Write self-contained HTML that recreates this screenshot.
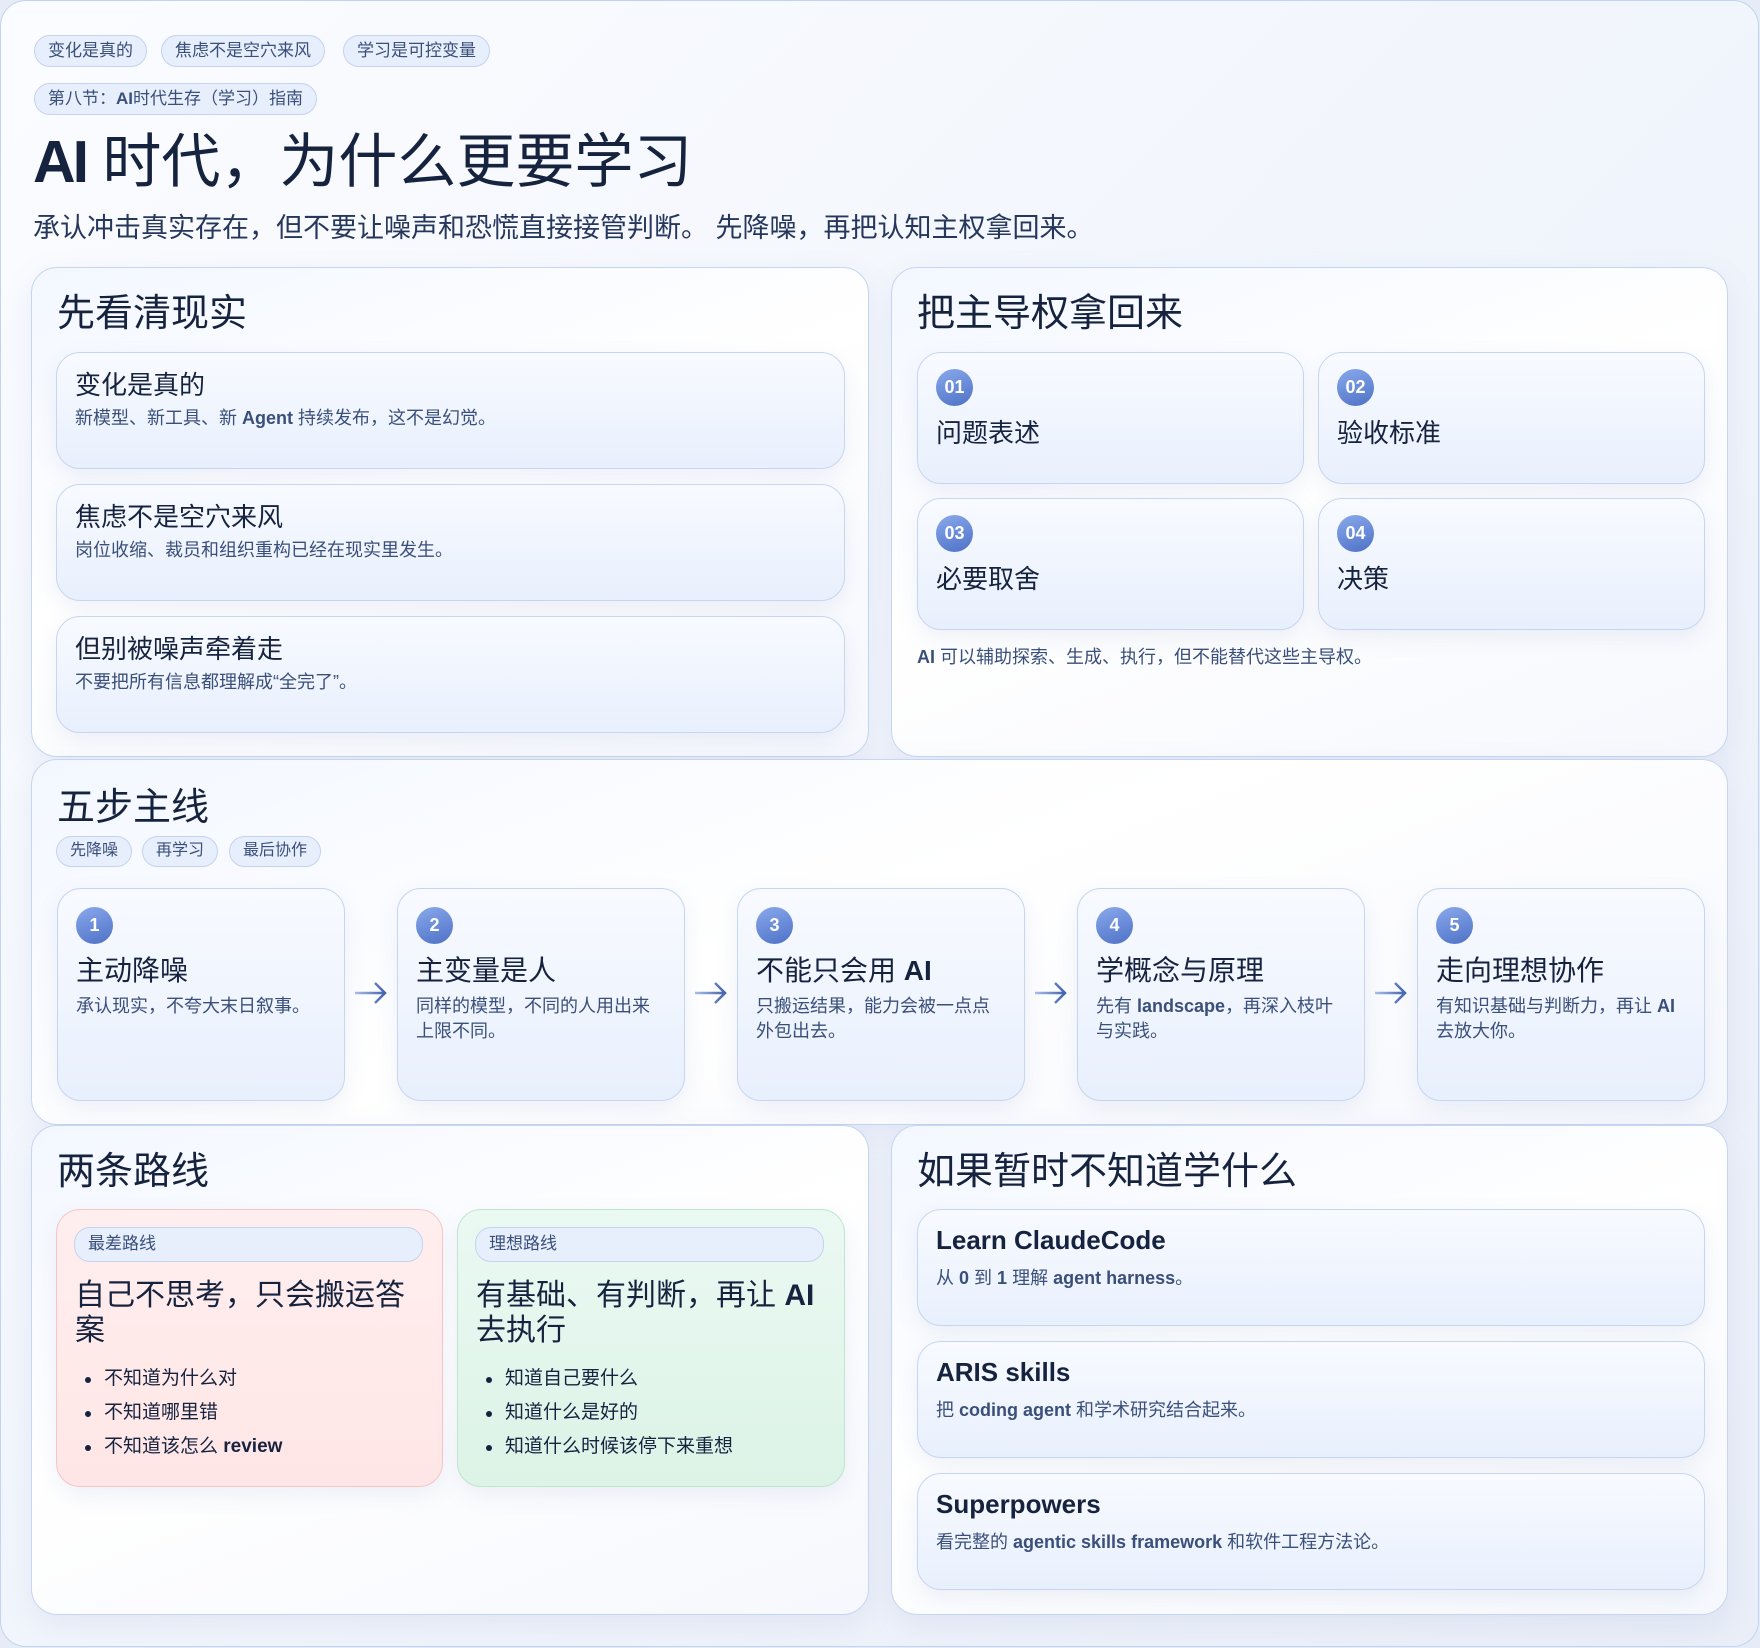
<!DOCTYPE html>
<html><head><meta charset="utf-8"><style>
*{box-sizing:border-box;margin:0;padding:0}
body{width:1760px;height:1648px;background:#e6ecf7;font-family:"Liberation Sans","Noto Sans CJK SC",sans-serif;color:#16233f;position:relative;overflow:hidden}
.frame{position:absolute;left:0;top:0;width:1759px;height:1647px;border:1.5px solid #c4d3ef;border-radius:26px;background:linear-gradient(135deg,#fbfcff 0%,#f1f5fc 50%,#e9eef8 100%)}
.a{position:absolute}
.chip{position:absolute;height:32px;border:1.5px solid #c3d3f0;background:#e7eefc;border-radius:16px;font-size:17px;color:#3a4f7a;line-height:29px;padding:0 13px;white-space:nowrap}
.panel{position:absolute;border:1.5px solid #c6d5f0;border-radius:26px;background:linear-gradient(160deg,#f3f7ff 0%,#ffffff 45%,#f6f8fd 100%);box-shadow:0 10px 30px rgba(120,140,190,.12)}
.ptitle{position:absolute;font-size:38px;left:25px;top:14px;color:#16233f;white-space:nowrap}
.card{position:absolute;border:1.5px solid #c6d5f0;border-radius:24px;background:linear-gradient(180deg,#f8faff 0%,#e8f0fd 100%);box-shadow:0 8px 22px rgba(120,140,190,.12)}
.ct{position:absolute;left:18px;font-size:26px;white-space:nowrap}
.cd{position:absolute;left:18px;font-size:18px;color:#3a4f7a;line-height:25px}
.badge{position:absolute;width:37px;height:37px;border-radius:50%;background:linear-gradient(160deg,#8aa9ec,#4d71c6);color:#fff;font-size:18px;font-weight:bold;text-align:center;line-height:37px}
.arrow{position:absolute;width:36px;height:30px}
ul{position:absolute;left:20px;list-style:none}
li{font-size:19px;height:34px;line-height:34px;position:relative;padding-left:28px}
li:before{content:"";position:absolute;left:9px;top:15px;width:6px;height:6px;border-radius:50%;background:#16233f}
</style></head><body>
<div class="frame"></div>
<div class="chip" style="left:34px;top:35px">变化是真的</div>
<div class="chip" style="left:161px;top:35px">焦虑不是空穴来风</div>
<div class="chip" style="left:343px;top:35px">学习是可控变量</div>
<div class="chip" style="left:34px;top:83px">第八节：<b style="font-weight:bold">AI</b>时代生存（学习）指南</div>
<div class="a" style="left:33px;top:124px;font-size:59px;white-space:nowrap;line-height:76px"><b style="letter-spacing:-3px">AI</b> 时代，为什么更要学习</div>
<div class="a" style="left:33px;top:206px;font-size:27px;color:#26375c;white-space:nowrap">承认冲击真实存在，但不要让噪声和恐慌直接接管判断。 先降噪，再把认知主权拿回来。</div>

<div class="panel" style="left:31px;top:267px;width:838px;height:490px">
<div class="ptitle">先看清现实</div>
<div class="card" style="left:24px;top:84px;width:789px;height:117px"><div class="ct" style="top:12px">变化是真的</div><div class="cd" style="top:53px">新模型、新工具、新 <b>Agent</b> 持续发布，这不是幻觉。</div></div>
<div class="card" style="left:24px;top:216px;width:789px;height:117px"><div class="ct" style="top:12px">焦虑不是空穴来风</div><div class="cd" style="top:53px">岗位收缩、裁员和组织重构已经在现实里发生。</div></div>
<div class="card" style="left:24px;top:348px;width:789px;height:117px"><div class="ct" style="top:12px">但别被噪声牵着走</div><div class="cd" style="top:53px">不要把所有信息都理解成“全完了”。</div></div>
</div>

<div class="panel" style="left:891px;top:267px;width:837px;height:490px">
<div class="ptitle">把主导权拿回来</div>
<div class="card" style="left:25px;top:84px;width:387px;height:132px"><div class="badge" style="left:18px;top:16px">01</div><div class="ct" style="top:60px">问题表述</div></div>
<div class="card" style="left:426px;top:84px;width:387px;height:132px"><div class="badge" style="left:18px;top:16px">02</div><div class="ct" style="top:60px">验收标准</div></div>
<div class="card" style="left:25px;top:230px;width:387px;height:132px"><div class="badge" style="left:18px;top:16px">03</div><div class="ct" style="top:60px">必要取舍</div></div>
<div class="card" style="left:426px;top:230px;width:387px;height:132px"><div class="badge" style="left:18px;top:16px">04</div><div class="ct" style="top:60px">决策</div></div>
<div class="cd" style="left:25px;top:377px"><b>AI</b> 可以辅助探索、生成、执行，但不能替代这些主导权。</div>
</div>

<div class="panel" style="left:31px;top:759px;width:1697px;height:366px">
<div class="ptitle" style="top:16px">五步主线</div>
<div class="chip" style="left:24px;top:76px;font-size:16px;height:31px;line-height:28px">先降噪</div>
<div class="chip" style="left:110px;top:76px;font-size:16px;height:31px;line-height:28px">再学习</div>
<div class="chip" style="left:197px;top:76px;font-size:16px;height:31px;line-height:28px">最后协作</div>
<div class="card" style="left:25px;top:128px;width:288px;height:213px"><div class="badge" style="left:18px;top:18px">1</div><div class="ct" style="top:60px;font-size:28px">主动降噪</div><div class="cd" style="top:105px;width:240px">承认现实，不夸大末日叙事。</div></div>
<svg class="arrow" style="left:321px;top:218px" viewBox="0 0 36 30"><defs><linearGradient id="g" x1="0" x2="1"><stop offset="0" stop-color="#a9bde6"/><stop offset="1" stop-color="#4463ae"/></linearGradient></defs><path d="M2 15H32M22 5L32 15L22 25" fill="none" stroke="url(#g)" stroke-width="2.5"/></svg>
<div class="card" style="left:365px;top:128px;width:288px;height:213px"><div class="badge" style="left:18px;top:18px">2</div><div class="ct" style="top:60px;font-size:28px">主变量是人</div><div class="cd" style="top:105px;width:240px">同样的模型，不同的人用出来上限不同。</div></div>
<svg class="arrow" style="left:661px;top:218px" viewBox="0 0 36 30"><path d="M2 15H32M22 5L32 15L22 25" fill="none" stroke="url(#g)" stroke-width="2.5"/></svg>
<div class="card" style="left:705px;top:128px;width:288px;height:213px"><div class="badge" style="left:18px;top:18px">3</div><div class="ct" style="top:60px;font-size:28px">不能只会用 <b>AI</b></div><div class="cd" style="top:105px;width:240px">只搬运结果，能力会被一点点外包出去。</div></div>
<svg class="arrow" style="left:1001px;top:218px" viewBox="0 0 36 30"><path d="M2 15H32M22 5L32 15L22 25" fill="none" stroke="url(#g)" stroke-width="2.5"/></svg>
<div class="card" style="left:1045px;top:128px;width:288px;height:213px"><div class="badge" style="left:18px;top:18px">4</div><div class="ct" style="top:60px;font-size:28px">学概念与原理</div><div class="cd" style="top:105px;width:245px">先有 <b>landscape</b>，再深入枝叶与实践。</div></div>
<svg class="arrow" style="left:1341px;top:218px" viewBox="0 0 36 30"><path d="M2 15H32M22 5L32 15L22 25" fill="none" stroke="url(#g)" stroke-width="2.5"/></svg>
<div class="card" style="left:1385px;top:128px;width:288px;height:213px"><div class="badge" style="left:18px;top:18px">5</div><div class="ct" style="top:60px;font-size:28px">走向理想协作</div><div class="cd" style="top:105px;width:245px">有知识基础与判断力，再让 <b>AI</b> 去放大你。</div></div>
</div>

<div class="panel" style="left:31px;top:1125px;width:838px;height:490px">
<div class="ptitle">两条路线</div>
<div class="card" style="left:24px;top:83px;width:387px;height:278px;background:linear-gradient(180deg,#ffeeee,#ffe6e6);border-color:#f4c6c6">
<div class="chip" style="left:17px;top:17px;width:349px;height:35px;line-height:32px">最差路线</div>
<div class="ct" style="top:68px;font-size:30px;line-height:35px;white-space:normal;width:350px">自己不思考，只会搬运答案</div>
<ul style="top:152px;left:19px"><li>不知道为什么对</li><li>不知道哪里错</li><li>不知道该怎么 <b>review</b></li></ul>
</div>
<div class="card" style="left:425px;top:83px;width:388px;height:278px;background:linear-gradient(180deg,#ebf9f3,#dcf3e6);border-color:#bfe5cf">
<div class="chip" style="left:17px;top:17px;width:349px;height:35px;line-height:32px">理想路线</div>
<div class="ct" style="top:68px;font-size:30px;line-height:35px;white-space:normal;width:350px">有基础、有判断，再让 <b>AI</b> 去执行</div>
<ul style="top:152px;left:19px"><li>知道自己要什么</li><li>知道什么是好的</li><li>知道什么时候该停下来重想</li></ul>
</div>
</div>

<div class="panel" style="left:891px;top:1125px;width:837px;height:490px">
<div class="ptitle">如果暂时不知道学什么</div>
<div class="card" style="left:25px;top:83px;width:788px;height:117px"><div class="ct" style="top:15px;font-weight:bold">Learn ClaudeCode</div><div class="cd" style="top:56px">从 <b>0</b> 到 <b>1</b> 理解 <b>agent harness</b>。</div></div>
<div class="card" style="left:25px;top:215px;width:788px;height:117px"><div class="ct" style="top:15px;font-weight:bold">ARIS skills</div><div class="cd" style="top:56px">把 <b>coding agent</b> 和学术研究结合起来。</div></div>
<div class="card" style="left:25px;top:347px;width:788px;height:117px"><div class="ct" style="top:15px;font-weight:bold">Superpowers</div><div class="cd" style="top:56px">看完整的 <b>agentic skills framework</b> 和软件工程方法论。</div></div>
</div>
</body></html>
